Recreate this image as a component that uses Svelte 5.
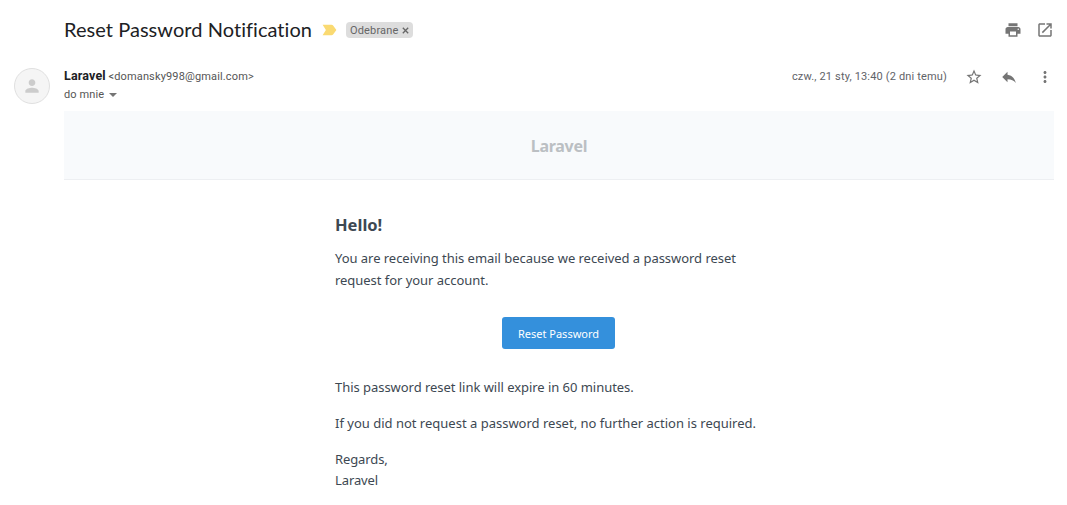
<script>
  const subject = 'Reset Password Notification';
  const sender = { name: 'Laravel', address: '<domansky998@gmail.com>' };
</script>

<main>
  <header class="subject">
    <h1>{subject}</h1>
    <svg class="important" width="15" height="12" viewBox="0 0 15 12"><path d="M.6.8h8.900q1 0 1.600.8L14.400 6l-3.300 4.400q-.6.8-1.600.8H.6L3.900 6z" fill="#fada72" /></svg>
    <span class="label"><span>Odebrane</span><svg width="7" height="7" viewBox="0 0 7 7"><path d="M.8.8l5.400 5.400M6.200.8L.8 6.200" stroke="#666" stroke-width="1.3" /></svg></span>
    <div class="tools">
      <svg class="icon" viewBox="0 0 24 24"><path d="M19 8H5c-1.66 0-3 1.34-3 3v6h4v4h12v-4h4v-6c0-1.66-1.34-3-3-3zm-3 11H8v-5h8v5zm3-7c-.55 0-1-.45-1-1s.45-1 1-1 1 .45 1 1-.45 1-1 1zm-1-9H6v4h12V3z" /></svg>
      <svg class="icon" viewBox="0 0 24 24"><path d="M19 19H5V5h7V3H5c-1.11 0-2 .9-2 2v14c0 1.1.89 2 2 2h14c1.1 0 2-.9 2-2v-7h-2v7zM14 3v2h3.59l-9.83 9.83 1.41 1.41L19 6.41V10h2V3h-7z" /></svg>
    </div>
  </header>

  <section class="sender">
    <div class="avatar">
      <svg width="20" height="20" viewBox="0 0 24 24"><path d="M12 12c2.21 0 4-1.79 4-4s-1.79-4-4-4-4 1.79-4 4 1.79 4 4 4zm0 2c-2.67 0-8 1.34-8 4v2h16v-2c0-2.66-5.33-4-8-4z" fill="#ccc" /></svg>
    </div>
    <div class="who">
      <div class="from"><b>{sender.name}</b><span class="address">{sender.address}</span></div>
      <div class="to"><span>do mnie</span><i class="caret"></i></div>
    </div>
    <time>czw., 21 sty, 13:40 (2 dni temu)</time>
    <div class="actions">
      <svg class="icon star" viewBox="0 0 24 24"><path d="M22 9.24l-7.19-.62L12 2 9.19 8.63 2 9.24l5.46 4.73L5.82 21 12 17.27 18.18 21l-1.63-7.03L22 9.24zM12 15.4l-3.76 2.27 1-4.28-3.32-2.88 4.38-.38L12 6.1l1.71 4.04 4.38.38-3.32 2.88 1 4.28L12 15.4z" /></svg>
      <svg class="icon reply" viewBox="0 0 24 24"><path d="M10 9V5l-7 7 7 7v-4.1c5 0 8.500 1.600 11 5.100-1-5-4-10-11-11z" /></svg>
      <svg class="icon" viewBox="0 0 24 24"><path d="M12 8c1.100 0 2-.9 2-2s-.9-2-2-2-2 .9-2 2 .9 2 2 2zm0 2c-1.100 0-2 .9-2 2s.9 2 2 2 2-.9 2-2-.9-2-2-2zm0 6c-1.100 0-2 .9-2 2s.9 2 2 2 2-.9 2-2-.9-2-2-2z" /></svg>
    </div>
  </section>

  <article>
    <div class="brand">Laravel</div>
    <div class="content">
      <h2>Hello!</h2>
      <p>You are receiving this email because we received a password reset<br />request for your account.</p>
      <div class="cta"><button>Reset Password</button></div>
      <p>This password reset link will expire in 60 minutes.</p>
      <p class="notice">If you did not request a password reset, no further action is required.</p>
      <p class="closing">Regards,<br />Laravel</p>
    </div>
  </article>
</main>

<style>
  :global(body) { background: #fff; overflow: hidden; }
  main { width: 1067px; height: 505px; overflow: hidden; font-family: Roboto, "Liberation Sans", sans-serif; }
  svg { display: block; flex: none; }
  .icon { width: 18px; height: 18px; fill: #757575; }
  .subject { height: 60px; box-sizing: border-box; padding: 0 13px 0 64px; display: flex; align-items: center; }
  h1 { margin: 0 0 2px; width: 248px; font: 400 20px/28px Lato, sans-serif; color: #202124; white-space: nowrap; letter-spacing: .05px; }
  .important { margin-left: 10px; }
  .label { margin-left: 9px; width: 67px; height: 16px; box-sizing: border-box; padding: 1px 4px 0; border-radius: 4px; background: #ddd; color: #666; display: flex; align-items: center; justify-content: space-between; font-size: 11px; line-height: 16px; letter-spacing: .15px; }
  .tools { margin-left: auto; display: flex; gap: 14px; }
  .sender { height: 51px; box-sizing: border-box; padding: 8px 13px 0 14px; display: flex; align-items: flex-start; }
  .avatar { width: 36px; height: 36px; box-sizing: border-box; border: 1px solid #e0e0e0; border-radius: 50%; background: #f5f5f5; display: flex; align-items: center; justify-content: center; }
  .avatar svg { margin-right: 1px; }
  .who { margin-left: 14px; font-size: 11px; color: #555; }
  .from { display: flex; align-items: baseline; height: 18px; line-height: 17px; white-space: nowrap; }
  .from b { width: 44.500px; font-size: 12.500px; line-height: 15px; color: #202124; letter-spacing: .15px; }
  .address { line-height: 15px; letter-spacing: .14px; }
  .to { display: flex; align-items: center; line-height: 17px; letter-spacing: .1px; }
  .caret { margin: 1px 0 0 5px; border: 4px solid transparent; border-top-color: #757575; border-bottom: 0; }
  time { margin-left: auto; font-size: 11px; line-height: 17px; color: #5f6368; letter-spacing: .16px; }
  .actions { display: flex; margin-left: 18px; }
  .star { margin-right: 17px; }
  .reply { margin-right: 18px; }
  article { margin: 0 13px 0 64px; font-family: "Noto Sans", "Open Sans", sans-serif; color: #3d4852; }
  .brand { height: 69px; box-sizing: border-box; border-bottom: 1px solid #edeff2; background: #f8fafc; color: #bbbfc3; text-align: center; font-size: 16px; font-weight: 700; line-height: 70px; letter-spacing: -.3px; }
  .content { width: 450px; margin-left: 271px; padding-top: 32px; }
  h2 { margin: 0; font-size: 16.500px; line-height: 26px; letter-spacing: 0; }
  p { margin: 0 0 14px; font-size: 13px; line-height: 22px; white-space: nowrap; letter-spacing: -.04px; }
  h2 + p { margin-top: 9px; margin-bottom: 26px; }
  .notice { letter-spacing: 0; }
  .cta { width: 447px; height: 32px; margin-bottom: 27px; display: flex; justify-content: center; }
  button { width: 113px; height: 32px; padding: 1px 0 0; border: 0; border-radius: 3px; background: #3490dc; color: #fff; font: 11px/31px "Noto Sans", sans-serif; letter-spacing: 0; }
  .closing { margin-top: 15px; line-height: 21px; letter-spacing: -.1px; }
</style>
